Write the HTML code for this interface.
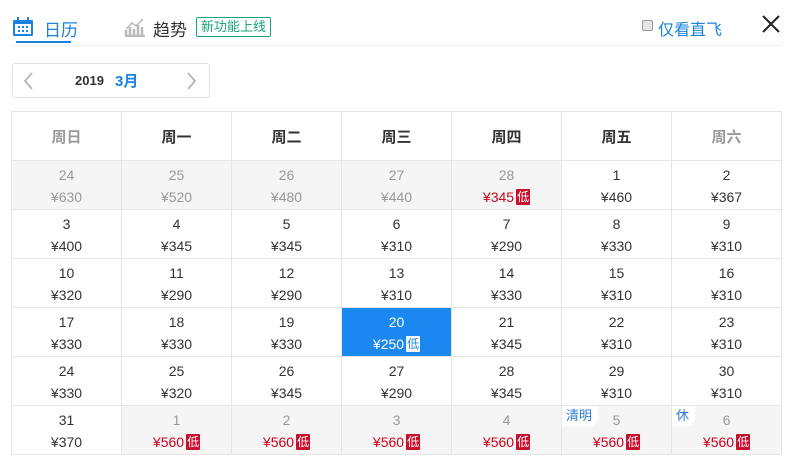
<!DOCTYPE html><html><head><meta charset="utf-8"><style>
*{margin:0;padding:0;box-sizing:border-box}
body{width:791px;height:456px;background:#fff;font-family:"Liberation Sans","Noto Sans CJK SC",sans-serif;position:relative;overflow:hidden;color:#333}
.a{position:absolute}
table{position:absolute;left:11px;top:111px;border-collapse:collapse;table-layout:fixed}
td{width:110px;height:49px;border:1px solid #e6e6e6;text-align:center;vertical-align:top;font-size:14px;color:#333;position:relative;padding:0}
tr.h td{height:49px;vertical-align:middle;font-size:15px;font-weight:bold;color:#333}
tr.h td.w{color:#999;font-weight:bold}
td .d{display:block;margin-top:5px;line-height:18px}
td .p{display:block;line-height:18px;margin-top:4px;height:18px}
td.g{background:#f5f5f5;color:#999}
td.r .p{color:#d0021b}
.lo{display:inline-block;background:#c8102e;color:#fff;font-size:12px;line-height:16px;width:14px;height:16px;vertical-align:top;margin-top:1px;margin-left:2px;border-radius:1px}
td.s{background:#1a88f0;color:#fff}
td.s .lo{background:#fff;color:#1a88f0}
.tag{position:absolute;left:0;top:0;background:#fff;color:#2b7bd6;font-size:13px;padding:0 6px 0 4px;line-height:20px;border-radius:0 0 8px 0}
</style></head><body>
<svg class="a" style="left:12px;top:17px" width="22" height="20" viewBox="0 0 22 20"><rect x="1" y="3" width="20" height="16" rx="1" fill="#1a82e0"/><rect x="3" y="7" width="16" height="10" fill="#fff"/><rect x="5" y="0" width="2" height="5" fill="#1a82e0"/><rect x="15" y="0" width="2" height="5" fill="#1a82e0"/><g fill="#1a82e0"><rect x="6" y="9" width="2" height="2"/><rect x="10" y="9" width="2" height="2"/><rect x="14" y="9" width="2" height="2"/><rect x="6" y="13" width="2" height="2"/><rect x="10" y="13" width="2" height="2"/><rect x="14" y="13" width="2" height="2"/></g></svg>
<div class="a" style="left:44px;top:16px;font-size:17px;color:#1a82e0">日历</div>
<div class="a" style="left:16px;top:41px;width:55px;height:2px;background:#1a82e0"></div>
<svg class="a" style="left:124px;top:17px" width="22" height="20" viewBox="0 0 22 20"><path d="M2 19V13M6 19V10M10 19V12M14 19V8M18 19V10M1 19H21" stroke="#bbb" stroke-width="2.5"/><path d="M2 12L8 6L12 9L19 2" stroke="#bbb" stroke-width="1.5" fill="none"/></svg>
<div class="a" style="left:153px;top:16px;font-size:17px;color:#333">趋势</div>
<div class="a" style="left:196px;top:17px;border:1px solid #1aa37a;color:#1aa37a;font-size:13px;line-height:18px;padding:0 4px;border-radius:2px">新功能上线</div>
<div class="a" style="left:12px;top:45px;width:770px;height:1px;background:#eee"></div>
<div class="a" style="left:642px;top:20px;width:11px;height:11px;border:1px solid #999;border-radius:2px;background:#e5e5e5"></div>
<div class="a" style="left:658px;top:16px;font-size:16px;color:#1a82e0">仅看直飞</div>
<svg class="a" style="left:761px;top:14px" width="20" height="20"><path d="M2 2L18 18M18 2L2 18" stroke="#222" stroke-width="2"/></svg>
<div class="a" style="left:12px;top:63px;width:198px;height:35px;border:1px solid #e3e3e3;border-radius:3px"></div>
<svg class="a" style="left:22px;top:72px" width="12" height="18"><path d="M10 1L3 9L10 17" stroke="#aaa" stroke-width="1.5" fill="none"/></svg>
<svg class="a" style="left:186px;top:72px" width="12" height="18"><path d="M2 1L9 9L2 17" stroke="#aaa" stroke-width="1.5" fill="none"/></svg>
<div class="a" style="left:75px;top:73px;font-size:13px;font-weight:bold;color:#333">2019</div>
<div class="a" style="left:115px;top:70px;font-size:15px;font-weight:bold;color:#1a82e0">3月</div>
<table>
<tr class="h" style="height:48px"><td class="w">周日</td><td>周一</td><td>周二</td><td>周三</td><td>周四</td><td>周五</td><td class="w">周六</td></tr>
<tr style="height:49px"><td class="g"><span class="d">24</span><span class="p">¥630</span></td><td class="g"><span class="d">25</span><span class="p">¥520</span></td><td class="g"><span class="d">26</span><span class="p">¥480</span></td><td class="g"><span class="d">27</span><span class="p">¥440</span></td><td class="g r"><span class="d">28</span><span class="p">¥345<span class="lo">低</span></span></td><td><span class="d">1</span><span class="p">¥460</span></td><td><span class="d">2</span><span class="p">¥367</span></td></tr>
<tr style="height:49px"><td><span class="d">3</span><span class="p">¥400</span></td><td><span class="d">4</span><span class="p">¥345</span></td><td><span class="d">5</span><span class="p">¥345</span></td><td><span class="d">6</span><span class="p">¥310</span></td><td><span class="d">7</span><span class="p">¥290</span></td><td><span class="d">8</span><span class="p">¥330</span></td><td><span class="d">9</span><span class="p">¥310</span></td></tr>
<tr style="height:49px"><td><span class="d">10</span><span class="p">¥320</span></td><td><span class="d">11</span><span class="p">¥290</span></td><td><span class="d">12</span><span class="p">¥290</span></td><td><span class="d">13</span><span class="p">¥310</span></td><td><span class="d">14</span><span class="p">¥330</span></td><td><span class="d">15</span><span class="p">¥310</span></td><td><span class="d">16</span><span class="p">¥310</span></td></tr>
<tr style="height:49px"><td><span class="d">17</span><span class="p">¥330</span></td><td><span class="d">18</span><span class="p">¥330</span></td><td><span class="d">19</span><span class="p">¥330</span></td><td class="s"><span class="d">20</span><span class="p">¥250<span class="lo">低</span></span></td><td><span class="d">21</span><span class="p">¥345</span></td><td><span class="d">22</span><span class="p">¥310</span></td><td><span class="d">23</span><span class="p">¥310</span></td></tr>
<tr style="height:49px"><td><span class="d">24</span><span class="p">¥330</span></td><td><span class="d">25</span><span class="p">¥320</span></td><td><span class="d">26</span><span class="p">¥345</span></td><td><span class="d">27</span><span class="p">¥290</span></td><td><span class="d">28</span><span class="p">¥345</span></td><td><span class="d">29</span><span class="p">¥310</span></td><td><span class="d">30</span><span class="p">¥310</span></td></tr>
<tr style="height:49px"><td><span class="d">31</span><span class="p">¥370</span></td><td class="g r"><span class="d">1</span><span class="p">¥560<span class="lo">低</span></span></td><td class="g r"><span class="d">2</span><span class="p">¥560<span class="lo">低</span></span></td><td class="g r"><span class="d">3</span><span class="p">¥560<span class="lo">低</span></span></td><td class="g r"><span class="d">4</span><span class="p">¥560<span class="lo">低</span></span></td><td class="g r"><span class="tag">清明</span><span class="d">5</span><span class="p">¥560<span class="lo">低</span></span></td><td class="g r"><span class="tag">休</span><span class="d">6</span><span class="p">¥560<span class="lo">低</span></span></td></tr>
</table>
</body></html>
